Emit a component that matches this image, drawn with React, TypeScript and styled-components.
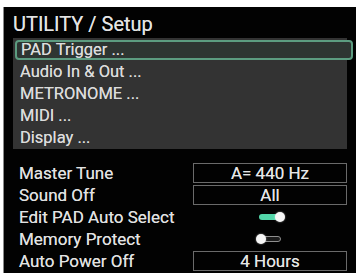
import React from "react";
import styled, { createGlobalStyle } from "styled-components";

const Global = createGlobalStyle`
  html, body { margin: 0; padding: 0; background: #fff; }
  body { width: 362px; height: 273px; overflow: hidden; font-family: Roboto, "Liberation Sans", sans-serif; }
`;

const Screen = styled.div`
  margin: 7px 0 0 3px;
  width: 353px;
  height: 266px;
  background: #020202;
  border-left: 1px solid #8a8a8a;
  box-sizing: border-box;
  display: flex;
  flex-direction: column;
  padding: 0 0 0 9px;
`;

const Title = styled.div`
  color: #e4e4e4;
  font-size: 20px;
  line-height: 22px;
  margin: 6px 0 3px 0;
  text-shadow: 0 0 0.6px rgba(255, 255, 255, 0.7);
`;

const MenuPanel = styled.div`
  width: 334px;
  background: #333333;
  display: flex;
  flex-direction: column;
  padding-top: 1px;
  height: 111px;
  box-sizing: border-box;
`;

const MenuItem = styled.div<{ $selected?: boolean }>`
  color: #dcdcdc;
  font-size: 16.5px;
  line-height: 18px;
  height: ${(p) => (p.$selected ? "20px" : "22px")};
  margin: ${(p) => (p.$selected ? "1px 0 1px 2px" : "0")};
  box-sizing: border-box;
  display: flex;
  align-items: center;
  padding-left: ${(p) => (p.$selected ? "4px" : "7px")};
  width: ${(p) => (p.$selected ? "338px" : "auto")};
  border: ${(p) => (p.$selected ? "2px solid #5c9c80" : "none")};
  border-radius: 4px;
  background: ${(p) => (p.$selected ? "#2e3532" : "transparent")};
  white-space: nowrap;
  text-shadow: 0 0 0.6px rgba(255, 255, 255, 0.7);
`;

const Settings = styled.div`
  display: flex;
  flex-direction: column;
  margin-top: 13px;
`;

const SettingRow = styled.div`
  display: grid;
  grid-template-columns: 180px 154px;
  align-items: center;
  height: 22px;
`;

const Label = styled.div`
  color: #e2e2e2;
  font-size: 17px;
  padding-left: 6px;
  white-space: nowrap;
  text-shadow: 0 0 0.6px rgba(255, 255, 255, 0.7);
`;

const ValueBox = styled.div`
  height: 20px;
  box-sizing: border-box;
  border: 1px solid #6a6a6a;
  color: #e6e6e6;
  font-size: 17px;
  display: flex;
  align-items: center;
  justify-content: center;
  text-shadow: 0 0 0.6px rgba(255, 255, 255, 0.7);
`;

const ToggleCell = styled.div`
  display: flex;
  justify-content: center;
  align-items: center;
  height: 20px;
`;

const Track = styled.div<{ $on: boolean }>`
  position: relative;
  width: 22px;
  height: 6px;
  border-radius: 3px;
  box-sizing: border-box;
  background: ${(p) => (p.$on ? "#52d6a8" : "#1a1a1a")};
  border: ${(p) => (p.$on ? "none" : "1px solid #8f8f8f")};
`;

const Knob = styled.div<{ $on: boolean }>`
  position: absolute;
  top: 50%;
  ${(p) => (p.$on ? "right: -4px;" : "left: -4px;")}
  width: 10px;
  height: 10px;
  margin-top: -5px;
  border-radius: 50%;
  background: #f6f6f6;
  box-shadow: 0 0 2px rgba(255, 255, 255, 0.6);
`;

const Toggle = ({ on }: { on: boolean }) => (
  <ToggleCell>
    <Track $on={on}>
      <Knob $on={on} />
    </Track>
  </ToggleCell>
);

const menu = ["PAD Trigger ...", "Audio In & Out ...", "METRONOME ...", "MIDI ...", "Display ..."];

export default function App() {
  return (
    <>
      <Global />
      <Screen>
        <Title>UTILITY / Setup</Title>
        <MenuPanel>
          {menu.map((m, i) => (
            <MenuItem key={m} $selected={i === 0}>
              {m}
            </MenuItem>
          ))}
        </MenuPanel>
        <Settings>
          <SettingRow>
            <Label>Master Tune</Label>
            <ValueBox>A= 440 Hz</ValueBox>
          </SettingRow>
          <SettingRow>
            <Label>Sound Off</Label>
            <ValueBox>All</ValueBox>
          </SettingRow>
          <SettingRow>
            <Label>Edit PAD Auto Select</Label>
            <Toggle on />
          </SettingRow>
          <SettingRow>
            <Label>Memory Protect</Label>
            <Toggle on={false} />
          </SettingRow>
          <SettingRow>
            <Label>Auto Power Off</Label>
            <ValueBox>4 Hours</ValueBox>
          </SettingRow>
        </Settings>
      </Screen>
    </>
  );
}
